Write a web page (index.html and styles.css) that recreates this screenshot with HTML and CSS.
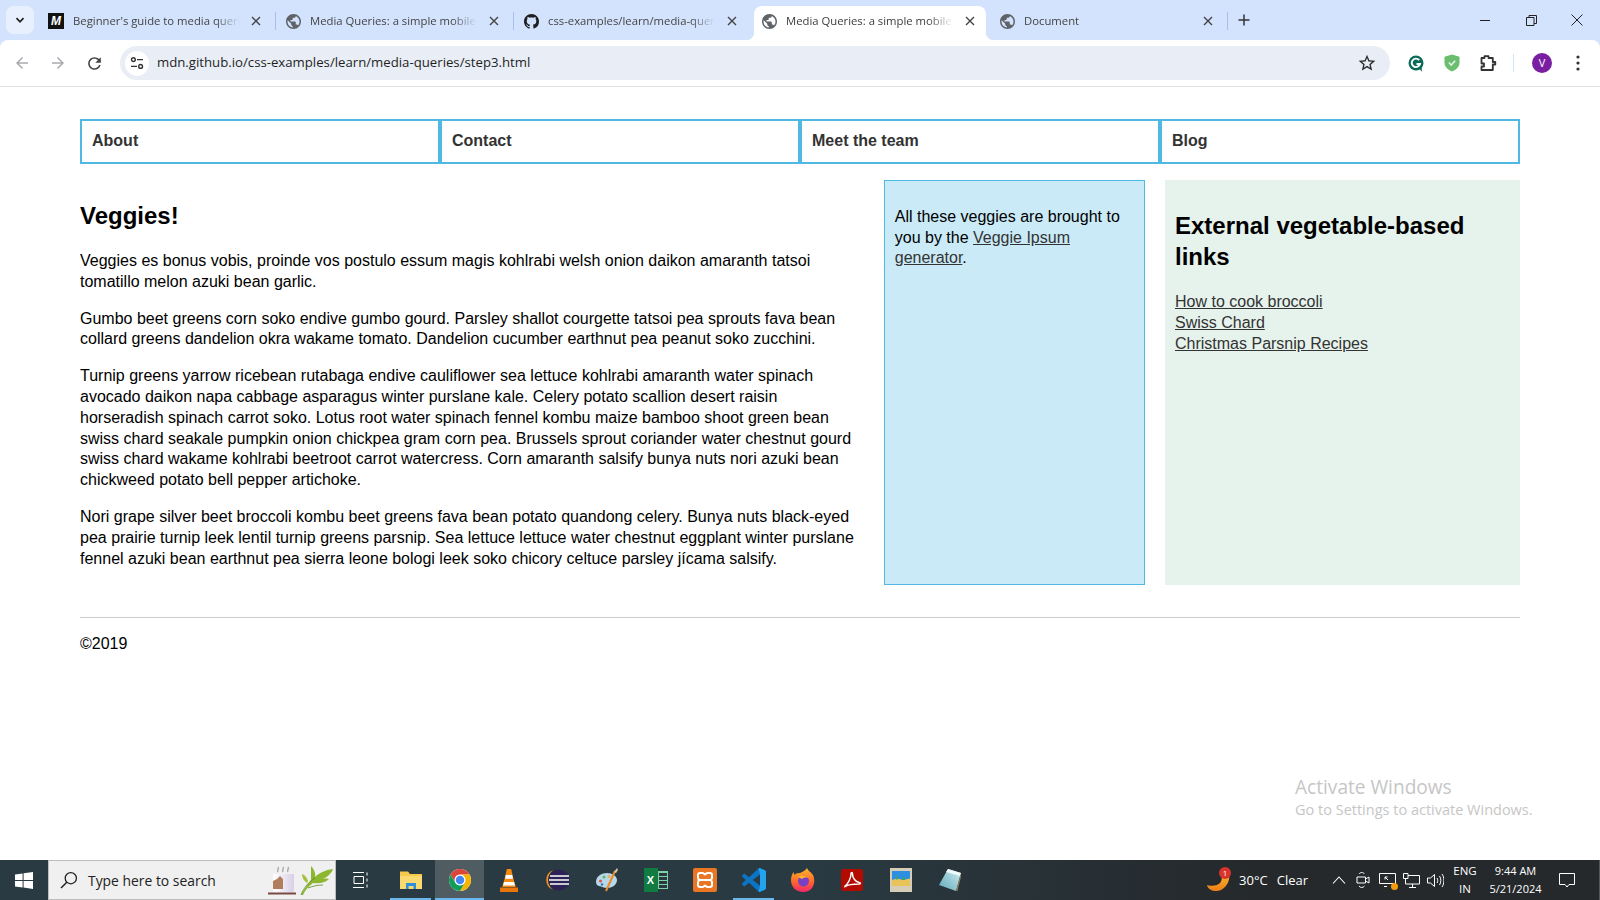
FILE: index.html
```html
<!DOCTYPE html>
<html lang="en">
<head>
    <meta charset="UTF-8">
    <meta name="viewport" content="width=device-width, initial-scale=1.0">
    <title>Media Queries: a simple mobile first design</title>
    <link rel="stylesheet" href="styles.css">
</head>
<body>
    <svg class="sprites" width="0" height="0" aria-hidden="true">
        <symbol id="globe" viewBox="2 2 20 20"><path fill="#5f6368" d="M12 2C6.48 2 2 6.48 2 12s4.48 10 10 10 10-4.48 10-10S17.52 2 12 2zm-1 17.93c-3.95-.49-7-3.85-7-7.93 0-.62.08-1.21.21-1.79L9 15v1c0 1.1.9 2 2 2v1.93zm6.9-2.54c-.26-.81-1-1.39-1.9-1.39h-1v-3c0-.55-.45-1-1-1H8v-2h2c.55 0 1-.45 1-1V7h2c1.1 0 2-.9 2-2v-.41c2.93 1.19 5 4.06 5 7.41 0 2.08-.8 3.97-2.1 5.39z"/></symbol>
        <symbol id="close" viewBox="0 0 10 10"><path d="M1 1l8 8M9 1L1 9" stroke="#444" stroke-width="1.4" fill="none"/></symbol>
    </svg>

    <!-- browser chrome -->
    <div class="browser">
        <div class="tabstrip">
            <button class="tab-list"><svg width="10" height="10" viewBox="0 0 10 10"><path d="M1.5 3.2L5 6.8l3.5-3.6" stroke="#1f1f1f" stroke-width="1.7" fill="none"/></svg></button>
            <div class="tab sep">
                <span class="fav-m">M</span>
                <span class="tab-title">Beginner's guide to media queries</span>
                <svg class="tab-close"><use href="#close"/></svg>
            </div>
            <div class="tab sep">
                <svg class="fav"><use href="#globe"/></svg>
                <span class="tab-title">Media Queries: a simple mobile first design</span>
                <svg class="tab-close"><use href="#close"/></svg>
            </div>
            <div class="tab">
                <svg class="fav" viewBox="0 0 16 16"><path fill="#1f1f1f" d="M8 0C3.58 0 0 3.58 0 8c0 3.54 2.29 6.53 5.47 7.59.4.07.55-.17.55-.38 0-.19-.01-.82-.01-1.49-2.01.37-2.53-.49-2.69-.94-.09-.23-.48-.94-.82-1.13-.28-.15-.68-.52-.01-.53.63-.01 1.08.58 1.23.82.72 1.21 1.87.87 2.33.66.07-.52.28-.87.51-1.07-1.78-.2-3.64-.89-3.64-3.95 0-.87.31-1.59.82-2.15-.08-.2-.36-1.02.08-2.12 0 0 .67-.21 2.2.82.64-.18 1.32-.27 2-.27.68 0 1.36.09 2 .27 1.53-1.04 2.2-.82 2.2-.82.44 1.1.16 1.92.08 2.12.51.56.82 1.27.82 2.15 0 3.07-1.87 3.75-3.65 3.95.29.25.54.73.54 1.48 0 1.07-.01 1.93-.01 2.2 0 .21.15.46.55.38A8.013 8.013 0 0016 8c0-4.42-3.58-8-8-8z"/></svg>
                <span class="tab-title">css-examples/learn/media-queries/step3.html</span>
                <svg class="tab-close"><use href="#close"/></svg>
            </div>
            <div class="tab active">
                <svg class="fav"><use href="#globe"/></svg>
                <span class="tab-title">Media Queries: a simple mobile first design</span>
                <svg class="tab-close"><use href="#close"/></svg>
            </div>
            <div class="tab sep">
                <svg class="fav"><use href="#globe"/></svg>
                <span class="tab-title">Document</span>
                <svg class="tab-close"><use href="#close"/></svg>
            </div>
            <button class="new-tab"><svg width="12" height="12" viewBox="0 0 12 12"><path d="M6 .5v11M.5 6h11" stroke="#333" stroke-width="1.5"/></svg></button>
            <div class="win-controls">
                <button><svg width="10" height="10" viewBox="0 0 10 10"><path d="M0 5.5h10" stroke="#222"/></svg></button>
                <button><svg width="11" height="11" viewBox="0 0 11 11"><path d="M.5 2.5h7.5v8H.5zM3 2.5V.5h7.5v8H8" stroke="#222" fill="none"/></svg></button>
                <button><svg width="12" height="12" viewBox="0 0 12 12"><path d="M.5.5l11 11M11.5.5l-11 11" stroke="#222"/></svg></button>
            </div>
        </div>
        <div class="toolbar">
            <button class="tool-btn"><svg width="18" height="18" viewBox="0 0 24 24"><path fill="#a9abae" d="M20 11H7.83l5.59-5.59L12 4l-8 8 8 8 1.41-1.41L7.83 13H20v-2z"/></svg></button>
            <button class="tool-btn"><svg width="18" height="18" viewBox="0 0 24 24"><path fill="#a9abae" d="M12 4l-1.41 1.41L16.17 11H4v2h12.17l-5.58 5.59L12 20l8-8z"/></svg></button>
            <button class="tool-btn"><svg width="19" height="19" viewBox="0 0 24 24"><path fill="#444" d="M17.65 6.35C16.2 4.9 14.21 4 12 4c-4.42 0-7.99 3.58-7.99 8s3.57 8 7.99 8c3.73 0 6.84-2.55 7.73-6h-2.08c-.82 2.33-3.04 4-5.65 4-3.31 0-6-2.69-6-6s2.69-6 6-6c1.66 0 3.14.69 4.22 1.78L13 11h7V4l-2.35 2.35z"/></svg></button>
            <div class="address">
                <span class="site-info"><svg width="14" height="14" viewBox="0 0 14 14"><g stroke="#333" stroke-width="1.4" fill="none"><circle cx="3.4" cy="3.6" r="1.9"/><path d="M7 3.6h6M1 10.4h6"/><circle cx="10.6" cy="10.4" r="1.9"/></g></svg></span>
                <span class="url">mdn.github.io/css-examples/learn/media-queries/step3.html</span>
                <svg class="star" width="20" height="20" viewBox="0 0 24 24"><path fill="#2a2a2a" d="M22 9.24l-7.19-.62L12 2 9.19 8.63 2 9.24l5.46 4.73L5.82 21 12 17.27 18.18 21l-1.63-7.03L22 9.24zM12 15.4l-3.76 2.27 1-4.28-3.32-2.88 4.38-.38L12 6.1l1.71 4.04 4.38.38-3.32 2.88 1 4.28L12 15.4z"/></svg>
            </div>
            <button class="tool-btn ext-first"><svg width="16" height="17" viewBox="0 0 16 17"><circle cx="8" cy="8" r="7.500" fill="#0c6b58"/><path d="M11.200 5.200A4.200 4.200 0 1 0 12 9H8.500" stroke="#fff" stroke-width="1.900" fill="none"/><path d="M11 13.500l3 3.200-.5-5z" fill="#0c6b58"/></svg></button>
            <button class="tool-btn"><svg width="16" height="18" viewBox="0 0 16 18"><path d="M8 .5l7.500 2.300v6c0 4-3.300 7-7.500 8.700C3.800 15.800.5 12.800.5 8.800v-6z" fill="#6abe6e"/><path d="M4.800 8.600l2.400 2.500 4-4.400" stroke="#e3f4e4" stroke-width="1.500" fill="none"/></svg></button>
            <button class="tool-btn"><svg width="17" height="16" viewBox="0 0 17 16"><path d="M1.500 3H4.500V1.200h4V3h4.300v4h2.500v2.500h-2.500V15H1.500v-3.500H4v-3H1.500z" fill="none" stroke="#333" stroke-width="1.800" stroke-linejoin="round"/></svg></button>
            <span class="tool-sep"></span>
            <button class="tool-btn"><span class="avatar">V</span></button>
            <button class="tool-btn"><svg width="4" height="16" viewBox="0 0 4 16"><g fill="#333"><circle cx="2" cy="2" r="1.6"/><circle cx="2" cy="8" r="1.6"/><circle cx="2" cy="14" r="1.6"/></g></svg></button>
        </div>
    </div>

    <!-- the page itself -->
    <div class="viewport">
        <div class="wrapper">
            <nav class="site-nav">
                <ul>
                    <li><a href="#">About</a></li>
                    <li><a href="#">Contact</a></li>
                    <li><a href="#">Meet the team</a></li>
                    <li><a href="#">Blog</a></li>
                </ul>
            </nav>
            <div class="columns">
                <main class="main">
                    <article>
                        <div class="content">
                            <h1>Veggies!</h1>
                            <p>Veggies es bonus vobis, proinde vos postulo essum magis kohlrabi welsh onion daikon amaranth tatsoi tomatillo melon azuki bean garlic.</p>
                            <p>Gumbo beet greens corn soko endive gumbo gourd. Parsley shallot courgette tatsoi pea sprouts fava bean collard greens dandelion okra wakame tomato. Dandelion cucumber earthnut pea peanut soko zucchini.</p>
                            <p>Turnip greens yarrow ricebean rutabaga endive cauliflower sea lettuce kohlrabi amaranth water spinach avocado daikon napa cabbage asparagus winter purslane kale. Celery potato scallion desert raisin horseradish spinach carrot soko. Lotus root water spinach fennel kombu maize bamboo shoot green bean swiss chard seakale pumpkin onion chickpea gram corn pea. Brussels sprout coriander water chestnut gourd swiss chard wakame kohlrabi beetroot carrot watercress. Corn amaranth salsify bunya nuts nori azuki bean chickweed potato bell pepper artichoke.</p>
                            <p>Nori grape silver beet broccoli kombu beet greens fava bean potato quandong celery. Bunya nuts black-eyed pea prairie turnip leek lentil turnip greens parsnip. Sea lettuce lettuce water chestnut eggplant winter purslane fennel azuki bean earthnut pea sierra leone bologi leek soko chicory celtuce parsley jícama salsify.</p>
                        </div>
                        <aside class="note">
                            <p>All these veggies are brought to you by the <a href="#">Veggie Ipsum generator</a>.</p>
                        </aside>
                    </article>
                </main>
                <aside class="related">
                    <h2>External vegetable-based links</h2>
                    <ul>
                        <li><a href="#">How to cook broccoli</a></li>
                        <li><a href="#">Swiss Chard</a></li>
                        <li><a href="#">Christmas Parsnip Recipes</a></li>
                    </ul>
                </aside>
            </div>
            <footer class="site-footer">
                <p>©2019</p>
            </footer>
        </div>
        <div class="activate">
            <div class="activate-title">Activate Windows</div>
            <div class="activate-sub">Go to Settings to activate Windows.</div>
        </div>
    </div>

    <!-- windows taskbar -->
    <div class="taskbar">
        <button class="start"><svg width="18" height="17" viewBox="0 0 18 17"><path fill="#fff" d="M0 2.6L7.6 1.4v6.5H0zM8.6 1.3L18 0v7.9H8.600zM0 8.9h7.6v6.6L0 14.4zM8.6 8.9H18V17l-9.4-1.4z"/></svg></button>
        <div class="search">
            <svg class="search-icon" width="18" height="18" viewBox="0 0 18 18"><circle cx="10.8" cy="7.2" r="5.6" stroke="#222" stroke-width="1.3" fill="none"/><path d="M6.8 11.2L1 17" stroke="#222" stroke-width="1.5"/></svg>
            <span class="search-text">Type here to search</span>
            <svg class="search-art" width="66" height="32" viewBox="0 0 66 32">
                <defs><linearGradient id="cup" x1="0" y1="0" x2="1" y2="0"><stop offset="0" stop-color="#fff"/><stop offset="1" stop-color="#d9cfe6"/></linearGradient></defs>
                <path d="M10 8c-1.500-2 1.500-3 0-5M15 8c-1.500-2 1.500-3 0-5M20 8c-1.500-2 1.500-3 0-5" stroke="#a8a8a8" stroke-width="1.400" fill="none"/>
                <path d="M5 10h21v16c0 1.500-1 2.500-3 2.500H8c-2 0-3-1-3-2.500z" fill="url(#cup)"/>
                <path d="M9 15l3-3 3 3v10H5v-8z" fill="#b27d5c"/>
                <path d="M0 28.500h28V30.500H0z" fill="#7a4a42"/>
                <path d="M33 31c4-7 7-11 10-15 0-5 0-10 0-14 3 3 5 8 4 11 4-4 10-7 18-8-2 6-8 10-16 11l-3 1c4-2 9-3 15-2-4 4-10 5-16 4-4 3-8 7-10 12z" fill="#8db72f"/>
                <path d="M33 31c3-8 8-13 14-17M40 24c5-2 10-3 15-3" stroke="#5c8a1d" stroke-width=".8" fill="none"/>
                <path d="M39 19c-3-2-5-5-5-9 3 1 5 4 6 7z" fill="#a3c23a"/>
            </svg>
        </div>
        <button class="task-view"><svg width="16" height="16" viewBox="0 0 16 16"><path d="M0 .5h11M0 15.500h11M1 4.500h9.500v7H1zM14 .5v3M14 6.500v3M14 12.500v3" stroke="#fff" fill="none"/></svg></button>
        <div class="apps">
            <button class="app running"><svg width="22" height="20" viewBox="0 0 22 20"><path d="M0 1.5h8l2 2.500h12v15H0z" fill="#f6c84c"/><path d="M0 6h22v13H0z" fill="#fbd971"/><path d="M6 19v-6h10v6h-2.600v-3H8.600v3z" fill="#2f8fd8"/></svg></button>
            <button class="app current"><svg width="24" height="24" viewBox="0 0 48 48"><circle cx="24" cy="24" r="22" fill="#fff"/><path fill="#db4437" d="M24 13H43.050A22 22 0 0 0 4.950 13L14.500 29.500A11 11 0 0 1 24 13Z"/><path fill="#f4b400" d="M43.050 13A22 22 0 0 1 24 46L33.500 29.500A11 11 0 0 0 24 13Z"/><path fill="#0f9d58" d="M24 46A22 22 0 0 1 4.950 13L14.500 29.500A11 11 0 0 0 33.500 29.500Z"/><circle cx="24" cy="24" r="8.500" fill="#4285f4"/></svg></button>
            <button class="app"><svg width="20" height="23" viewBox="0 0 20 23"><path d="M7.800 0h4.400l2 9 2.600 9H3.200l2.600-9z" fill="#f58a10"/><path d="M6.800 6h6.400l.8 3.800H6zM5 13h10l1 3.500H4z" fill="#fff"/><path d="M1 18.500h18V23H1z" fill="#e8760a"/></svg></button>
            <button class="app"><svg width="24" height="22" viewBox="0 0 24 22"><circle cx="13" cy="11" r="10.500" fill="#2c2255"/><path d="M7 1.200A10.500 10.500 0 0 0 7 20.800 12 12 0 0 1 7 1.200z" fill="#f7941e"/><path d="M4 7h19M3 11h20M4 15h19" stroke="#fff" stroke-width="1.500"/></svg></button>
            <button class="app"><svg width="24" height="24" viewBox="0 0 24 24"><path d="M1 14C1 8 7 5 12 5c5 0 10 3 10 7 0 5-5 8-10 8-3 0-4-1-6-1.500-3-.5-5-1.500-5-4.500z" fill="#b7d7ea"/><circle cx="5.500" cy="13" r="1.500" fill="#d9534f"/><circle cx="9" cy="9" r="1.500" fill="#5cb85c"/><circle cx="14" cy="8.500" r="1.500" fill="#f0ad4e"/><circle cx="7" cy="16.500" r="1.300" fill="#337ab7"/><path d="M11 23l9-20" stroke="#e98b2a" stroke-width="2"/><path d="M19 4l3-4 1 2-2 3z" fill="#d9c39a"/></svg></button>
            <button class="app"><span class="excel-icon"><span class="excel-x">X</span><span class="excel-grid"></span></span></button>
            <button class="app"><svg width="24" height="24" viewBox="0 0 24 24"><rect width="24" height="24" rx="2" fill="#ea7524"/><path d="M7 5h3l2 1.500L14 5h3a2 2 0 0 1 2 2v2a2.500 2.500 0 0 1-2 3 2.500 2.500 0 0 1 2 3v2a2 2 0 0 1-2 2h-3l-2-1.500L10 19H7a2 2 0 0 1-2-2v-2a2.500 2.500 0 0 1 2-3 2.500 2.500 0 0 1-2-3V7a2 2 0 0 1 2-2zM7 12h10" fill="none" stroke="#fff" stroke-width="2" stroke-linejoin="round"/></svg></button>
            <button class="app running"><svg width="24" height="24" viewBox="0 0 24 24"><path fill="#0b74c4" d="M23.150 2.587L18.210.21a1.494 1.494 0 0 0-1.705.29l-9.460 8.630-4.120-3.128a.999.999 0 0 0-1.276.057L.327 7.261A1 1 0 0 0 .326 8.740L3.899 12 .326 15.260a1 1 0 0 0 .001 1.479L1.650 17.940a.999.999 0 0 0 1.276.057l4.120-3.128 9.460 8.630a1.492 1.492 0 0 0 1.704.29l4.942-2.377A1.500 1.500 0 0 0 24 20.060V3.939a1.500 1.500 0 0 0-.85-1.352zm-5.146 14.861L10.826 12l7.178-5.448v10.896z"/><path fill="#23a3ee" d="M18.210.21a1.494 1.494 0 0 0-1.705.29L18 6.550v10.900l-1.500 6.050a1.492 1.492 0 0 0 1.704.29l4.946-2.377A1.500 1.500 0 0 0 24 20.060V3.939a1.500 1.500 0 0 0-.85-1.352z"/></svg></button>
            <button class="app"><svg width="24" height="24" viewBox="0 0 24 24"><defs><linearGradient id="fox" x1="0" y1="0" x2="0" y2="1"><stop offset="0" stop-color="#ffb62b"/><stop offset=".55" stop-color="#ff6b2b"/><stop offset="1" stop-color="#f5256c"/></linearGradient></defs><path d="M16 0c1 3 4 4 6 7 3 6 1 17-10 17C5 24 0 19 0 12 0 9 1 6 2.500 4l1 3C5 5 8 5 9 5c2-1 5-2 7-5z" fill="url(#fox)"/><circle cx="12.500" cy="13" r="5.500" fill="#7b3fc4"/><path d="M7 9c3-2 8-2 10 1-3-1-5 0-6 1-1-1-3-1-4-2z" fill="#ffb62b"/></svg></button>
            <button class="app"><svg width="22" height="22" viewBox="0 0 22 22"><rect width="22" height="22" rx="3" fill="#b30b00"/><path d="M4 17c3-2 6-8 6-12 0-2 1.500-2 1.500 0 0 4 3 8 6.500 8.500 2 .3 1.500 1.500 0 1.500-5 0-10 0-14 2.500z" fill="none" stroke="#fff" stroke-width="1.500"/></svg></button>
            <button class="app"><svg width="22" height="24" viewBox="0 0 22 24"><rect width="22" height="24" fill="#d6cdb8"/><rect x="2" y="3" width="18" height="15" fill="#2e8fe0"/><path d="M2 12l5-1.500 6 1.500 7-1.500V18H2z" fill="#e8c35a"/><path d="M6 11.500c0-5 1.500-5 2 0zM12 12c0-4 3-4 3 0z" fill="#3ba55d"/></svg></button>
            <button class="app"><svg width="22" height="24" viewBox="0 0 22 24"><defs><linearGradient id="pad" x1="0" y1="1" x2="1" y2="0"><stop offset="0" stop-color="#5fa8b8"/><stop offset="1" stop-color="#cfeef2"/></linearGradient></defs><path d="M9 1l13 4-5 18L0 17z" fill="url(#pad)"/><path d="M9 1l13 4-1 3L7 4z" fill="#eef8f9"/><path d="M22 5l-5 18 1.500 0L22 9z" fill="#8a7a5a"/></svg></button>
        </div>
        <div class="tray">
            <div class="weather">
                <span class="weather-icon">
                    <svg width="23" height="23" viewBox="0 0 23 23"><defs><linearGradient id="moon" x1="0" y1="0" x2="0" y2="1"><stop offset="0" stop-color="#fbc02d"/><stop offset="1" stop-color="#ef7d17"/></linearGradient></defs><path d="M22 3c2 11-5 19-13 19-4 0-8-2-9-6 6 2 11 0 13-2 2-2 2-6 2-9z" fill="url(#moon)"/></svg>
                    <span class="weather-badge">1</span>
                </span>
                <span class="weather-temp">30°C</span>
                <span class="weather-text">Clear</span>
            </div>
            <button class="tray-btn"><svg width="14" height="8" viewBox="0 0 14 8"><path d="M1 7.500L7 1l6 6.500" stroke="#fff" stroke-width="1.100" fill="none"/></svg></button>
            <button class="tray-btn"><svg width="14" height="18" viewBox="0 0 14 18"><path d="M1 6h8.500v6H1zM9.500 8l3.500-2v6l-3.500-2zM3 3c1.500-2 4-2 5.500 0M3 15c1.500 2 4 2 5.500 0" stroke="#fff" fill="none"/></svg></button>
            <button class="tray-btn"><span class="screen-icon"><svg width="17" height="16" viewBox="0 0 17 16"><path d="M.5 1.500h16v10H.5zM5 14.500h3M6 5l3 3M6 5v2.500M6 5h2.500M11 3.500v0" stroke="#fff" fill="none"/></svg><span class="screen-dot"></span></span></button>
            <button class="tray-btn"><svg width="17" height="16" viewBox="0 0 17 16"><path d="M.5 1.500h4.500v5H.5zM5 3.500h11.500v8.500H2.500V6.500M9.500 12v3M6 15.500h7" stroke="#fff" fill="none"/></svg></button>
            <button class="tray-btn"><svg width="17" height="15" viewBox="0 0 17 15"><path d="M.5 5h3l4-3.500v12l-4-3.500h-3zM10 5c1 1.500 1 3.500 0 5M12.500 3c1.800 2.500 1.800 6.500 0 9M15 1c2.500 3.500 2.500 9.500 0 13" stroke="#fff" fill="none"/></svg></button>
            <div class="lang"><span>ENG</span><span>IN</span></div>
            <div class="clock"><span>9:44 AM</span><span>5/21/2024</span></div>
            <button class="notif"><svg width="16" height="15" viewBox="0 0 16 15"><path d="M.5.500h15v11H10l-2 2.500-2-2.500H.5z" stroke="#fff" fill="none"/></svg></button>
            <span class="show-desktop"></span>
        </div>
    </div>
</body>
</html>
```

FILE: styles.css
```css
* {
    box-sizing: border-box;
}
html, body {
    height: 100%;
}
body {
    margin: 0;
    display: flex;
    flex-direction: column;
    height: 900px;
    overflow: hidden;
    background: #fff;
    color: #000;
    font: 16px/1.3 "Liberation Sans", Arial, sans-serif;
}
button {
    border: 0;
    padding: 0;
    background: none;
    display: flex;
    align-items: center;
    justify-content: center;
    font: inherit;
    color: inherit;
}
.sprites {
    position: absolute;
}

/* browser chrome */
.browser {
    flex: none;
    background: #d3e3fd;
    font-family: "Open Sans", "Liberation Sans", sans-serif;
}
.tabstrip {
    height: 40px;
    display: flex;
    align-items: flex-end;
}
.tab-list {
    width: 28px;
    height: 28px;
    margin: 0 6px 6px 6px;
    border-radius: 8px;
    background: #e9f0fd;
}
.tab {
    position: relative;
    width: 232px;
    height: 34px;
    margin-right: 6px;
    padding: 0 11px 4px 8px;
    display: flex;
    align-items: center;
    color: #444;
    font-size: 11.3px;
}
.tab.sep::after {
    content: "";
    position: absolute;
    right: -4px;
    top: 6px;
    height: 18px;
    width: 1px;
    background: #a8c0e8;
}
.tab.active {
    background: #fff;
    border-radius: 8px 8px 0 0;
    color: #3c3c3c;
}
.tab.active::before,
.tab.active::after {
    content: "";
    position: absolute;
    bottom: 0;
    width: 8px;
    height: 8px;
}
.tab.active::before {
    left: -8px;
    background: radial-gradient(circle at 0 0, transparent 8px, #fff 8.5px);
}
.tab.active::after {
    right: -8px;
    background: radial-gradient(circle at 100% 0, transparent 8px, #fff 8.5px);
}
.fav, .fav-m {
    flex: none;
    width: 15px;
    height: 15px;
}
.fav-m {
    width: 16px;
    height: 16px;
    background: #111;
    color: #fff;
    font: italic 700 12px/16px "Liberation Sans", sans-serif;
    text-align: center;
}
.tab-title {
    margin-left: 9px;
    width: 167px;
    flex: none;
    overflow: hidden;
    white-space: nowrap;
    -webkit-mask-image: linear-gradient(to right, #000 85%, transparent);
    mask-image: linear-gradient(to right, #000 85%, transparent);
}
.tab-close {
    flex: none;
    width: 10px;
    height: 10px;
    margin-left: auto;
}
.new-tab {
    width: 28px;
    height: 28px;
    margin: 0 0 6px 0;
}
.win-controls {
    margin-left: auto;
    display: flex;
    align-self: stretch;
}
.win-controls button {
    width: 46px;
    height: 40px;
}

.toolbar {
    height: 47px;
    background: #fff;
    border-radius: 8px 8px 0 0;
    border-bottom: 1px solid #e3e3e3;
    padding: 6px 0 0 4px;
    display: flex;
    align-items: flex-start;
}
.tool-btn {
    width: 36px;
    height: 34px;
    flex: none;
}
.address {
    width: 1270px;
    height: 34px;
    margin-left: 8px;
    border-radius: 17px;
    background: #e9eef6;
    padding: 0 13px 0 5px;
    display: flex;
    align-items: center;
    flex: none;
}
.site-info {
    width: 24px;
    height: 25px;
    border-radius: 50%;
    background: #fff;
    display: flex;
    align-items: center;
    justify-content: center;
}
.url {
    margin-left: 8px;
    font-size: 13.2px;
    color: #1f1f1f;
    white-space: nowrap;
}
.star {
    margin-left: auto;
}
.ext-first {
    margin-left: 8px;
}
.tool-sep {
    width: 1px;
    height: 18px;
    margin: 8px 10px 0 7px;
    background: #d3e3fd;
    flex: none;
}
.avatar {
    width: 20px;
    height: 20px;
    border-radius: 50%;
    background: #7b1fa2;
    color: #fff;
    font-size: 11px;
    line-height: 20px;
    text-align: center;
}

/* page content */
.viewport {
    flex: 1;
    position: relative;
    min-height: 0;
}
.wrapper {
    max-width: 90%;
    margin: 32px auto 0;
}
.site-nav {
    margin-bottom: 16px;
}
.site-nav ul {
    list-style: none;
    margin: 0;
    padding: 0;
    display: flex;
}
.site-nav li {
    flex: 1;
    border: 2px solid #4fb9e3;
    padding: 10px;
}
.site-nav a {
    color: #333;
    font-weight: 700;
    text-decoration: none;
}
a {
    color: #333;
}
.columns {
    display: grid;
    grid-template-columns: 3fr 1fr;
    column-gap: 20px;
}
article {
    display: grid;
    grid-template-columns: 3fr 1fr;
    column-gap: 20px;
    height: 100%;
}
h1, h2 {
    font-size: 24px;
    margin: 20px 0;
}
p {
    margin: 16px 0;
}
.note {
    border: 1px solid #4fb9e3;
    background: rgba(79, 185, 227, 0.3);
    padding: 10px;
}
.related {
    background: #e6f2ec;
    padding: 10px;
}
.related ul {
    list-style: none;
    margin: 0;
    padding: 0;
}
.site-footer {
    margin-top: 32px;
    border-top: 1px solid #ccc;
}
.activate {
    position: absolute;
    left: 1295px;
    top: 687px;
    color: #c6c6c6;
    font-family: "Open Sans", sans-serif;
}
.activate-title {
    font-size: 19.1px;
    line-height: 26px;
}
.activate-sub {
    font-size: 14.5px;
    line-height: 19px;
}

/* taskbar */
.taskbar {
    flex: none;
    height: 40px;
    display: flex;
    background: linear-gradient(to right, #2a3a42, #2a3a42 50%, #25292c 78%);
    font-family: "Open Sans", sans-serif;
    color: #fff;
}
.start {
    width: 48px;
    flex: none;
}
.search {
    width: 288px;
    flex: none;
    display: flex;
    align-items: center;
    background: #f0f0f0;
    border: 1px solid #bdbdbd;
    padding: 0 1px 0 11px;
    color: #222;
}
.search-text {
    margin: 2px 0 0 10px;
    font-size: 13.9px;
    white-space: nowrap;
}
.search-art {
    margin-left: auto;
}
.task-view {
    width: 50px;
    flex: none;
}
.apps {
    display: flex;
}
.app {
    width: 49px;
    height: 40px;
    position: relative;
}
.app.current {
    background: #4f5c62;
}
.app.running::after,
.app.current::after {
    content: "";
    position: absolute;
    left: 4px;
    right: 4px;
    bottom: 0;
    height: 2px;
    background: #6ab7ee;
}
.app.current::after {
    left: 0;
    right: 0;
}
.excel-icon {
    width: 24px;
    height: 24px;
    display: flex;
    align-items: center;
}
.excel-x {
    width: 14px;
    height: 24px;
    background: #107c41;
    color: #fff;
    font: 700 11px/24px "Liberation Sans", sans-serif;
    text-align: center;
}
.excel-grid {
    width: 10px;
    height: 18px;
    border: 1px solid #7fd1a1;
    background: repeating-linear-gradient(to bottom, #7fd1a1 0 1px, #2a3a42 1px 4px);
}
.tray {
    margin-left: auto;
    display: flex;
    align-items: center;
    font-size: 11px;
}
.weather {
    display: flex;
    align-items: center;
    margin-right: 19px;
    font-size: 13px;
}
.weather-icon {
    position: relative;
    display: flex;
    margin-right: 9px;
}
.weather-badge {
    position: absolute;
    right: -1px;
    top: -2px;
    width: 12px;
    height: 12px;
    border-radius: 50%;
    background: #d9342b;
    color: #fff;
    font-size: 8px;
    line-height: 12px;
    text-align: center;
}
.weather-text {
    margin-left: 9px;
}
.tray-btn {
    width: 24px;
    height: 40px;
}
.screen-icon {
    position: relative;
    display: flex;
}
.screen-dot {
    position: absolute;
    right: -2px;
    bottom: -2px;
    width: 7px;
    height: 7px;
    border-radius: 50%;
    background: #f59a0c;
}
.lang, .clock {
    display: flex;
    flex-direction: column;
    align-items: center;
    gap: 2px;
    line-height: 16px;
}
.lang {
    width: 34px;
    margin-left: 1px;
    font-size: 11.5px;
}
.clock {
    width: 67px;
    margin-right: 4px;
}
.notif {
    width: 28px;
    height: 40px;
}
.show-desktop {
    width: 19px;
    height: 40px;
    border-right: 1px solid #555;
    border-left: 14px solid transparent;
    padding-right: 4px;
}
```
